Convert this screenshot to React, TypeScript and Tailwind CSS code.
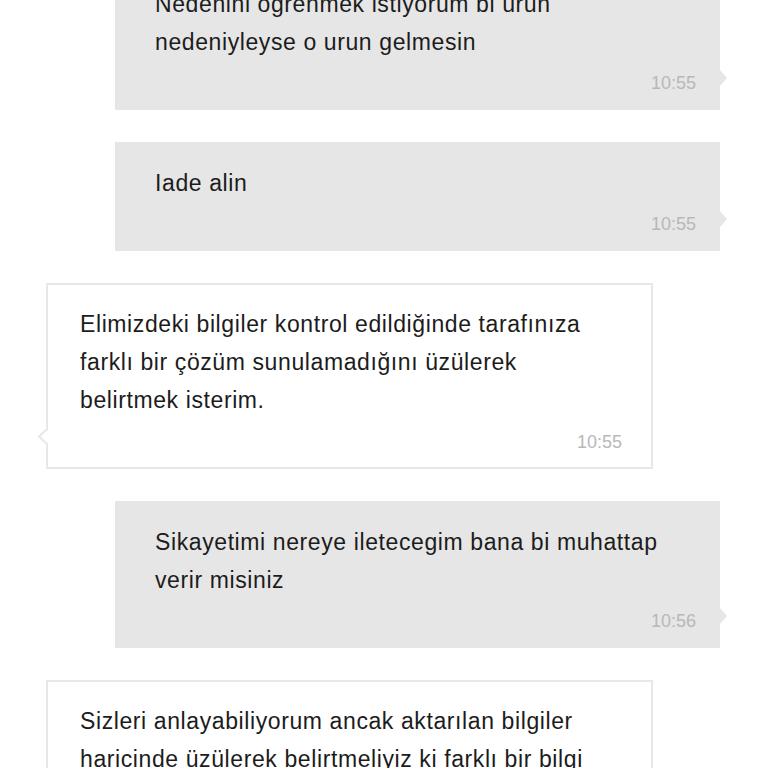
import React from "react";

type Msg = { side: "me" | "them"; lines: string[]; time: string };

const msgs: Msg[] = [
  { side: "me", lines: ["Nedenini öğrenmek istiyorum bi ürün", "nedeniyleyse o urun gelmesin"], time: "10:55" },
  { side: "me", lines: ["Iade alin"], time: "10:55" },
  {
    side: "them",
    lines: [
      "Elimizdeki bilgiler kontrol edildiğinde tarafınıza",
      "farklı bir çözüm sunulamadığını üzülerek",
      "belirtmek isterim.",
    ],
    time: "10:55",
  },
  { side: "me", lines: ["Sikayetimi nereye iletecegim bana bi muhattap", "verir misiniz"], time: "10:56" },
  {
    side: "them",
    lines: ["Sizleri anlayabiliyorum ancak aktarılan bilgiler", "haricinde üzülerek belirtmeliyiz ki farklı bir bilgi", "verilememektedir."],
    time: "10:56",
  },
];

function Bubble({ m, first }: { m: Msg; first: boolean }) {
  const me = m.side === "me";
  return (
    <div
      className={
        me
          ? "relative ml-[115px] w-[605px] shrink-0 bg-[#e6e6e6] pl-[40px] pr-[24px] pt-[22px] pb-[15px]"
          : "relative ml-[46px] w-[607px] shrink-0 bg-white border-2 border-[#e8e8e8] pl-[32px] pr-[29px] pt-[20px] pb-[13px]"
      }
      style={first ? { marginTop: -37 } : undefined}
    >
      <div className="text-[23px] leading-[38px] text-[#1c1c1c] tracking-[0.6px]">
        {m.lines.map((l, i) => (
          <div key={i} className="whitespace-nowrap">
            {l}
          </div>
        ))}
      </div>
      <div className={(me ? "mt-[10px]" : "mt-[11px]") + " text-right text-[18px] leading-[24px] text-[#b8b8b8]"}>
        {m.time}
      </div>
      {me ? (
        <div className="absolute left-full bottom-[24px] w-0 h-0 border-l-[7px] border-l-[#e6e6e6] border-y-[8px] border-y-transparent" />
      ) : (
        <div className="absolute left-[-8px] bottom-[25px] w-[11px] h-[11px] rotate-45 bg-white border-l-2 border-b-2 border-[#e8e8e8]" />
      )}
    </div>
  );
}

export default function App() {
  return (
    <div
      className="w-[768px] h-[768px] overflow-hidden bg-white flex flex-col gap-[32px]"
      style={{ fontFamily: '"Liberation Sans", Arial, sans-serif' }}
    >
      {msgs.map((m, i) => (
        <Bubble key={i} m={m} first={i === 0} />
      ))}
    </div>
  );
}
